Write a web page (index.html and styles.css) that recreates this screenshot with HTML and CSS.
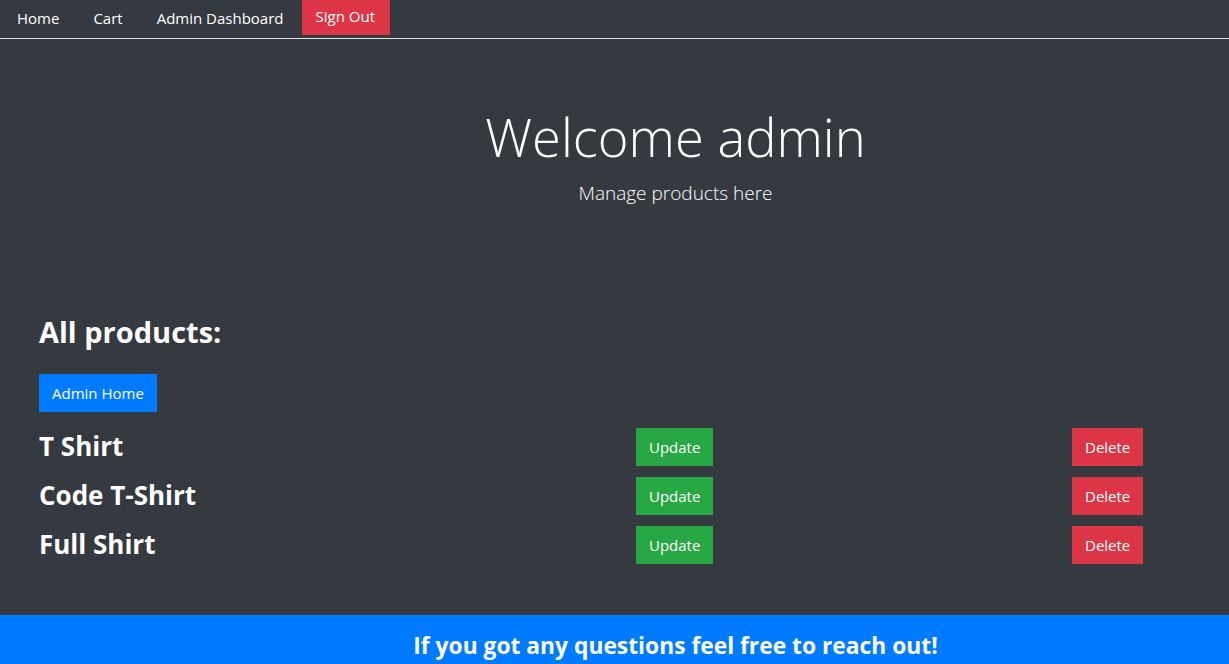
FILE: index.html
```html
<!DOCTYPE html>
<html lang="en">
<head>
<meta charset="utf-8">
<title>Admin</title>
<link rel="stylesheet" href="styles.css">
</head>
<body>
<nav class="navbar">
  <a class="nav-link" href="#">Home</a>
  <a class="nav-link" href="#">Cart</a>
  <a class="nav-link" href="#">Admin Dashboard</a>
  <a class="nav-btn" href="#">Sign Out</a>
</nav>
<header class="hero">
  <h1 class="hero-title">Welcome admin</h1>
  <p class="hero-lead">Manage products here</p>
</header>
<main class="products">
  <h2 class="products-title">All products:</h2>
  <a class="btn btn-primary" href="#">Admin Home</a>
  <div class="product-list">
    <div class="product-row">
      <h3 class="product-name">T Shirt</h3>
      <a class="btn btn-success" href="#">Update</a>
      <a class="btn btn-danger" href="#">Delete</a>
    </div>
    <div class="product-row">
      <h3 class="product-name">Code T-Shirt</h3>
      <a class="btn btn-success" href="#">Update</a>
      <a class="btn btn-danger" href="#">Delete</a>
    </div>
    <div class="product-row">
      <h3 class="product-name">Full Shirt</h3>
      <a class="btn btn-success" href="#">Update</a>
      <a class="btn btn-danger" href="#">Delete</a>
    </div>
  </div>
</main>
<footer class="footer">
  <h4 class="footer-text">If you got any questions feel free to reach out!</h4>
</footer>
</body>
</html>
```

FILE: styles.css
```css
* { box-sizing: border-box; }
html, body { margin: 0; padding: 0; }
body {
  background: #343a40;
  color: #fff;
  font-family: "Open Sans", "Noto Sans", sans-serif;
  font-size: 16px;
  line-height: 1.5;
  min-height: 664px;
}
a { text-decoration: none; color: #fff; }

.navbar {
  display: flex;
  align-items: flex-start;
  height: 39px;
  border-bottom: 1px solid #dee2e6;
}
.nav-link {
  padding: 6px 17px 8px;
  line-height: 24px;
  font-size: 15px;
}
.nav-btn {
  margin-left: 1px;
  background: #dc3545;
  padding: 4px 15px 7px 14px;
  line-height: 24px;
  font-size: 15px;
}

.hero {
  text-align: center;
  padding: 66px 0 0 122px;
  height: 270px;
}
.hero-title {
  margin: 0;
  font-size: 52.5px;
  font-weight: 300;
  line-height: 1.2;
}
.hero-lead {
  margin: 10px 0 0;
  font-size: 19px;
  font-weight: 300;
  line-height: 30px;
}

.products {
  padding: 6px 39px 0;
}
.products-title {
  margin: 0 0 24px;
  font-size: 29px;
  font-weight: 700;
  line-height: 1.2;
}
.btn {
  display: inline-block;
  font-size: 15px;
  line-height: 24px;
  padding: 7px 13px;
  color: #fff;
}
.btn-primary { background: #007bff; }
.btn-success { background: #28a745; }
.btn-danger { background: #dc3545; }

.product-list {
  display: flex;
  flex-direction: column;
  gap: 11px;
  margin-top: 16px;
}
.product-row {
  display: grid;
  grid-template-columns: 597px 436px auto;
  align-items: center;
  justify-items: start;
  height: 38px;
}
.product-name {
  margin: 0;
  font-size: 26px;
  font-weight: 700;
  line-height: 1.2;
}

.footer {
  margin-top: 51px;
  background: #007bff;
  text-align: center;
  padding: 17px 0 20px 122px;
}
.footer-text {
  margin: 0;
  font-size: 22.8px;
  font-weight: 700;
  line-height: 1.2;
}
```
